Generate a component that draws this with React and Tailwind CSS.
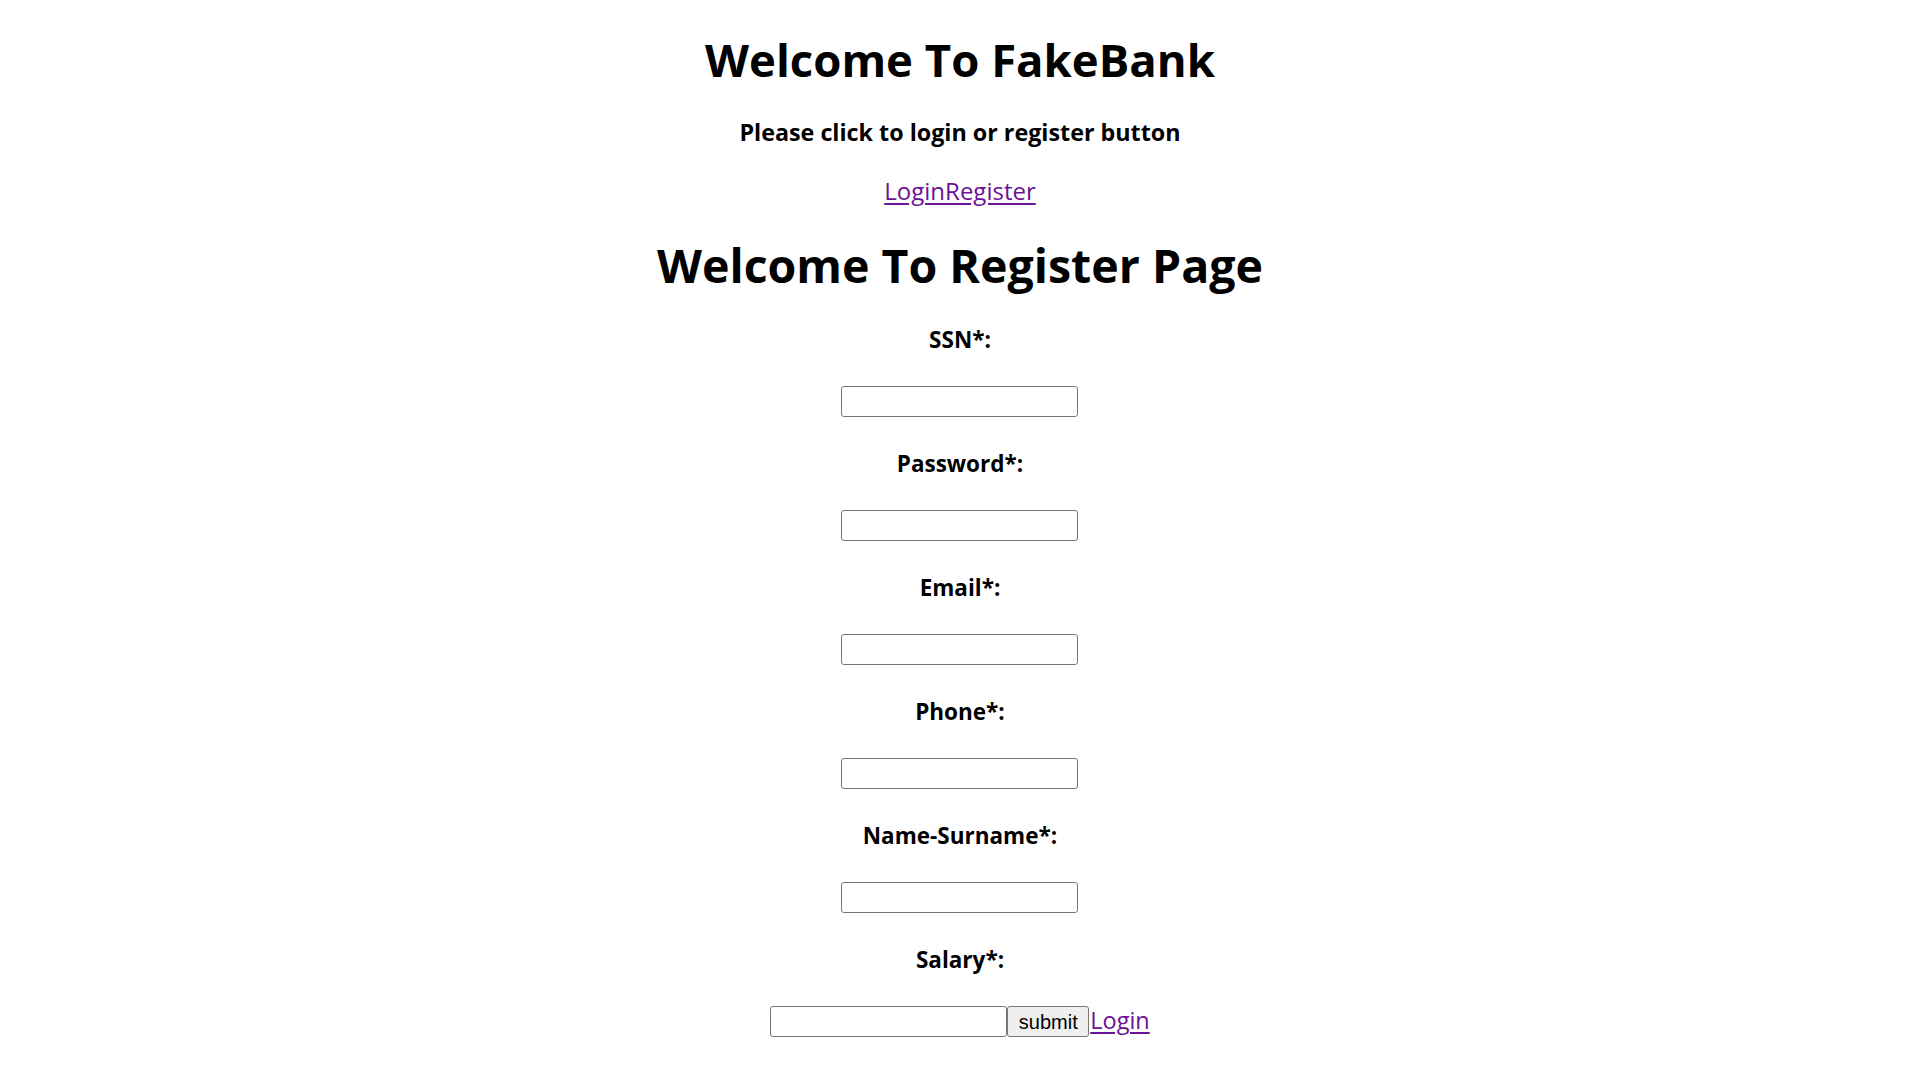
const fields = ["SSN*:", "Password*:", "Email*:", "Phone*:", "Name-Surname*:", "Salary*:"];

function Field({ label, last }) {
  return (
    <div className="flex flex-col items-center">
      <h4 className="mt-[33px] text-[22.5px] leading-[28px] font-bold">{label}</h4>
      <div className="mt-[32px] flex items-start">
        <input type="text" className="w-[237px] h-[31px] border border-[#767676] rounded-[3px] bg-white px-1 outline-none" />
        {last && (
          <>
            <button className="w-[82px] h-[31px] border border-[#767676] rounded-[3px] bg-[#efefef] text-[20px] leading-[26px] text-black font-['Liberation_Sans',Arial,sans-serif]">
              submit
            </button>
            <a href="#" className="ml-px text-[23.5px] leading-[28px] text-[#6b1296] underline underline-offset-[3px]">
              Login
            </a>
          </>
        )}
      </div>
    </div>
  );
}

export default function App() {
  return (
    <div className="min-h-screen bg-white text-black font-['Open_Sans',sans-serif] flex flex-col items-center pt-[32px] pb-[40px]">
      <h1 className="text-[45.5px] leading-[54px] font-bold">Welcome To FakeBank</h1>
      <h4 className="mt-[32px] text-[23.3px] leading-[28px] font-bold">Please click to login or register button</h4>
      <p className="mt-[31px] text-[24px] leading-[28px]">
        <a href="#" className="text-[#6b1296] underline underline-offset-[3px]">Login</a>
        <a href="#" className="text-[#6b1296] underline underline-offset-[3px]">Register</a>
      </p>
      <h1 className="mt-[33px] text-[46.5px] leading-[54px] font-bold">Welcome To Register Page</h1>
      <div className="mt-px flex flex-col items-center">
        {fields.map((f, i) => (
          <Field key={f} label={f} last={i === fields.length - 1} />
        ))}
      </div>
    </div>
  );
}
